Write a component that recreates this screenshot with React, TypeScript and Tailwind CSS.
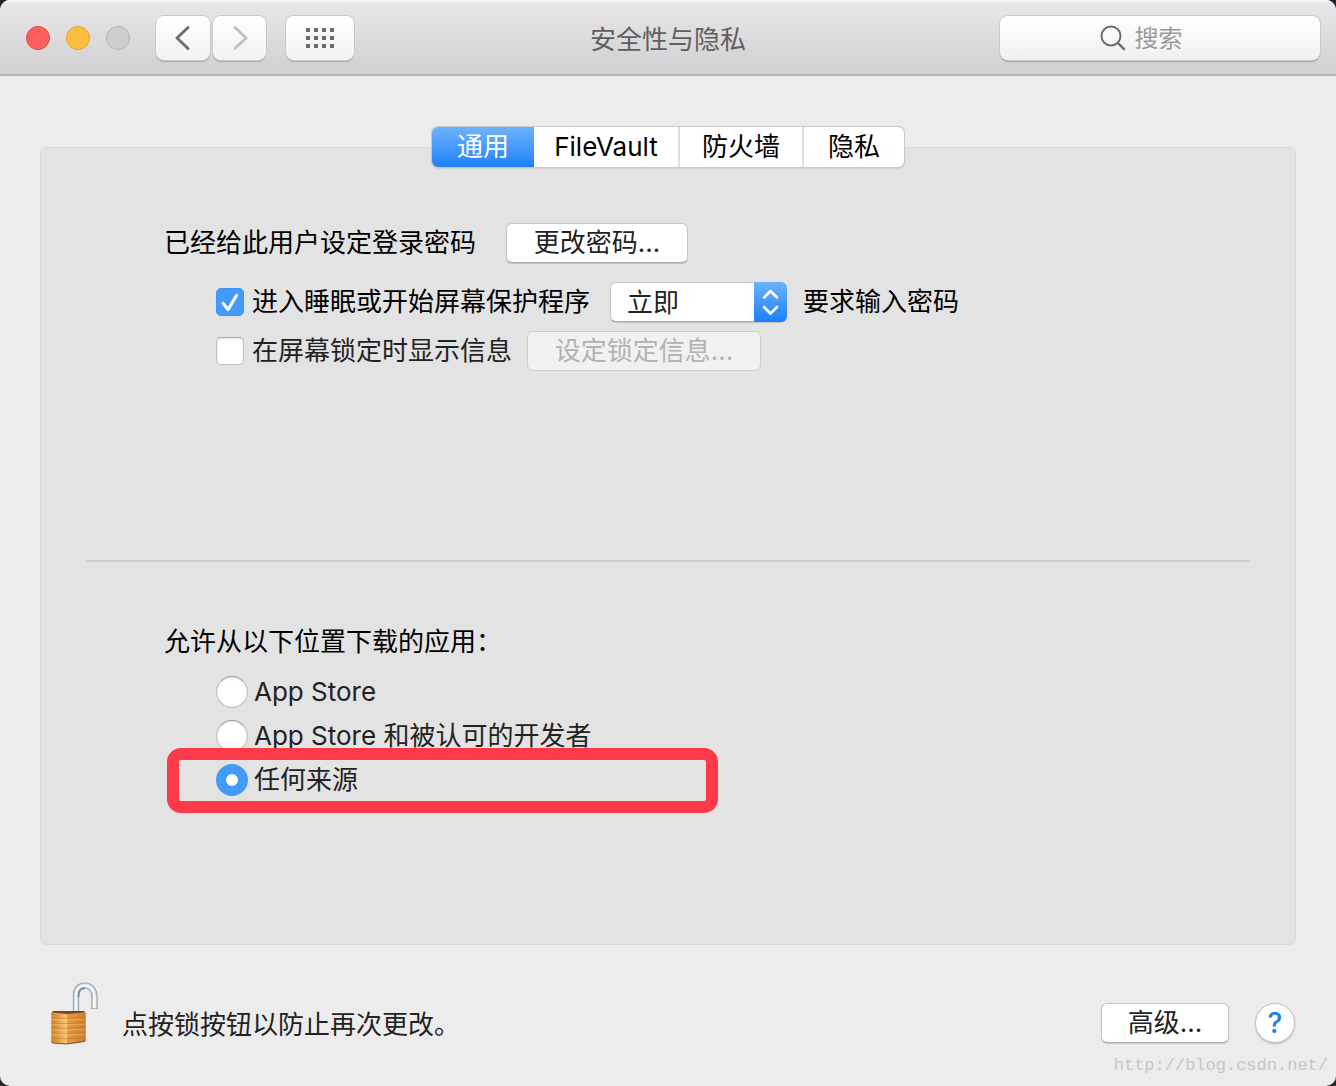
import { useState } from "react";
import type { ReactNode } from "react";
import clsx from "clsx";

const TABS = [
  { id: "general", label: "通用", width: "w-[102px]" },
  { id: "filevault", label: "FileVault", width: "w-[146px]" },
  { id: "firewall", label: "防火墙", width: "w-[124px]" },
  { id: "privacy", label: "隐私", width: "w-[100px]" },
];

const SOURCES = [
  { id: "app-store", label: "App Store" },
  { id: "identified", label: "App Store 和被认可的开发者" },
  { id: "anywhere", label: "任何来源" },
];

const DOTS = [0, 1, 2, 3].flatMap((x) => [0, 1, 2].map((y) => ({ x, y })));

interface ToolButtonProps {
  label: string;
  className: string;
  disabled?: boolean;
  children: ReactNode;
}

const ToolButton = (props: ToolButtonProps) => (
  <button
    aria-label={props.label}
    disabled={props.disabled}
    className={clsx(
      "flex h-11 items-center justify-center rounded-lg bg-linear-to-b from-white to-[#f1f1f1] shadow-[0_0_0_1px_#c9c7c9,0_2px_1px_#a9a7a9]",
      props.className,
    )}
  >
    {props.children}
  </button>
);

interface PushButtonProps {
  className: string;
  disabled?: boolean;
  children: ReactNode;
}

const PushButton = (props: PushButtonProps) => (
  <button
    disabled={props.disabled}
    className={clsx(
      "h-10 rounded-md border text-center leading-9",
      props.disabled
        ? "border-[#cbcbcb] bg-[#f1f1f1] text-[#b2b2b2]"
        : "border-[#c6c6c6] border-b-[#ababab] bg-white text-[#222] shadow-[0_1px_1px_#00000026]",
      props.className,
    )}
  >
    {props.children}
  </button>
);

interface CheckBoxProps {
  id: string;
  checked: boolean;
  onChange: (checked: boolean) => void;
}

const CheckBox = (props: CheckBoxProps) => (
  <span className="relative flex size-7 shrink-0">
    <input
      id={props.id}
      type="checkbox"
      checked={props.checked}
      onChange={(e) => props.onChange(e.target.checked)}
      className="size-7 appearance-none rounded-[5px] border border-[#bdbdbd] border-t-[#a9a9a9] bg-white shadow-[inset_0_1px_2px_#0000001a] checked:border-[#3d92f3] checked:bg-[#429bf8] checked:shadow-none"
    />
    {props.checked && (
      <svg
        viewBox="0 0 28 28"
        className="pointer-events-none absolute inset-0 size-7"
        fill="none"
        stroke="#fff"
        strokeWidth="3"
        strokeLinecap="round"
        strokeLinejoin="round"
      >
        <path d="M7.2 15.4 12 21.6 20.6 7.4" />
      </svg>
    )}
  </span>
);

const LockIcon = () => (
  <svg viewBox="0 0 50 64" className="h-16 w-[50px]">
    <defs>
      <linearGradient id="lockFront" x1="0" x2="1">
        <stop offset="0" stopColor="#cf8431" />
        <stop offset="0.5" stopColor="#e8a04b" />
        <stop offset="1" stopColor="#fcc878" />
      </linearGradient>
      <linearGradient id="lockSide" x1="0" x2="1">
        <stop offset="0" stopColor="#e59a42" />
        <stop offset="0.5" stopColor="#dc8f3a" />
        <stop offset="1" stopColor="#c97c2c" />
      </linearGradient>
    </defs>
    <g fill="none">
      <path d="M26 31V14C26 7.5 30 4.5 35 4.5S44.500 8.500 44.500 16V28" stroke="#8d9aa3" strokeWidth="6.200" />
      <path d="M26 31V14C26 7.5 30 4.5 35 4.5S44.500 8.500 44.500 16V27.200" stroke="#c9d2d8" strokeWidth="4.600" />
      <path d="M26 31V14C26 7.5 30 4.5 35 4.5S44.500 8.500 44.500 16V27.200" stroke="#f4f7f9" strokeWidth="2.600" />
      <path d="M28.500 16C28.500 9.500 31 7 35 7" stroke="#7e8c96" strokeWidth="1.800" />
    </g>
    <path d="M1.300 31.500 3 30H34L35.700 31.500 17 34Z" fill="#79471a" />
    <path d="M1.300 31.500 17 33V63L2.500 62Q1.300 61.500 1.300 60Z" fill="url(#lockFront)" />
    <path d="M17 33 35.700 31.500V58.500Q35.700 60 34 60.500L17 63Z" fill="url(#lockSide)" />
    <g fill="none" strokeWidth="0.900">
      <path
        d="M1.300 37 17 37.500 35.700 36.500M1.300 42 17 42.500 35.700 41.500M1.300 47 17 47.500 35.700 46.500M1.300 52 17 52.500 35.700 51.500M1.300 57 17 57.700 35.700 56"
        stroke="#a85f1b"
        opacity="0.4"
      />
      <path
        d="M1.300 38.500 17 39 35.700 38M1.300 43.500 17 44 35.700 43M1.300 48.500 17 49 35.700 48M1.300 53.500 17 54 35.700 53"
        stroke="#ffd58c"
        opacity="0.45"
      />
    </g>
    <path d="M1.500 60.500Q1.500 61.800 3 62L17 63 34 60.500Q35.500 60 35.500 58.500" fill="none" stroke="#8a4a16" />
  </svg>
);

export default function App() {
  const [tab, setTab] = useState("general");
  const [requirePassword, setRequirePassword] = useState(true);
  const [showMessage, setShowMessage] = useState(false);
  const [source, setSource] = useState("anywhere");

  return (
    <div className="min-h-screen bg-[#25232a] font-[Inter,'Noto_Sans_CJK_SC',sans-serif] text-[26px] leading-10 text-black">
      <div className="relative flex min-h-screen flex-col overflow-hidden rounded-[10px] bg-[#ececec]">
        <header className="grid grid-cols-[1fr_auto_1fr] items-center border-b-2 border-[#b3b1b3] bg-linear-to-b from-[#e9e7e9] to-[#d1cfd1] px-4 pt-4 pb-[14px] shadow-[inset_0_2px_0_#f5f4f5]">
          <div className="flex items-center">
            <div className="ml-[10px] flex gap-4">
              <button aria-label="关闭" className="size-6 rounded-full border border-[#e1484a] bg-[#fc605c]" />
              <button aria-label="最小化" className="size-6 rounded-full border border-[#e0a033] bg-[#fdbd3f]" />
              <button aria-label="缩放" disabled className="size-6 rounded-full border border-[#b3b1b3] bg-[#cfcecf]" />
            </div>
            <div className="ml-[26px] flex gap-[3px]">
              <ToolButton label="后退" className="w-[54px]">
                <svg viewBox="0 0 16 26" className="h-[26px] w-4" fill="none" stroke="#6f6f6f" strokeWidth="3" strokeLinecap="round" strokeLinejoin="round">
                  <path d="M13 2.500 2 13 13 23.500" />
                </svg>
              </ToolButton>
              <ToolButton label="前进" disabled className="w-[53px]">
                <svg viewBox="0 0 16 26" className="h-[26px] w-4" fill="none" stroke="#c1c1c1" strokeWidth="3" strokeLinecap="round" strokeLinejoin="round">
                  <path d="M3 2.500 14 13 3 23.500" />
                </svg>
              </ToolButton>
            </div>
            <ToolButton label="显示全部" className="ml-5 w-[68px]">
              <svg viewBox="0 0 28 20" className="h-5 w-7" fill="#6a6a6a">
                {DOTS.map((dot) => (
                  <rect key={`${dot.x}-${dot.y}`} x={dot.x * 8} y={dot.y * 8} width="4" height="4" />
                ))}
              </svg>
            </ToolButton>
          </div>
          <h1 className="pt-1 text-[#5f5f5f]">安全性与隐私</h1>
          <label className="flex h-11 w-80 items-center justify-center gap-[9px] justify-self-end rounded-lg bg-linear-to-b from-white to-[#f0f0f0] pr-[38px] shadow-[0_0_0_1px_#c9c7c9,0_2px_1px_#a9a7a9]">
            <svg viewBox="0 0 26 26" className="size-[26px]" fill="none" stroke="#6d6d6d" strokeWidth="2">
              <circle cx="11" cy="11" r="9.500" />
              <path d="m17.800 17.800 7 7" strokeWidth="2.400" />
            </svg>
            <input
              type="text"
              aria-label="搜索"
              placeholder="搜索"
              className="w-12 bg-transparent pt-0.5 text-2xl outline-none placeholder:text-[#9a9a9a]"
            />
          </label>
        </header>

        <main className="flex flex-1 flex-col px-10 pt-[51px]">
          <div
            role="tablist"
            className="relative z-10 -mb-5 flex h-10 self-center overflow-hidden rounded-md bg-white shadow-[0_0_0_1px_#c8c8c8,0_1px_2px_#00000040]"
          >
            {TABS.map((item) => (
              <button
                key={item.id}
                role="tab"
                aria-selected={tab === item.id}
                onClick={() => setTab(item.id)}
                className={clsx(
                  "h-10 border-[#dedede] text-center not-last:border-r-2",
                  item.width,
                  tab === item.id && "border-r-0! bg-linear-to-b from-[#6cb3fa] to-[#1a80fc] text-white",
                )}
              >
                {item.label}
              </button>
            ))}
          </div>

          <section className="flex-1 rounded-md border border-[#d9d9d9] bg-[#e3e3e3] pt-[75px] pb-20">
            <div className="flex items-center gap-[30px] pl-[123px]">
              <span>已经给此用户设定登录密码</span>
              <PushButton className="w-[182px]">更改密码...</PushButton>
            </div>
            <div className="mt-[19px] flex items-center pl-[175px]">
              <CheckBox id="require" checked={requirePassword} onChange={setRequirePassword} />
              <label htmlFor="require" className="ml-2">
                进入睡眠或开始屏幕保护程序
              </label>
              <span className="relative ml-5 flex">
                <select
                  aria-label="要求输入密码的时间"
                  className="h-10 w-[177px] appearance-none rounded-md border border-[#c6c6c6] border-b-[#ababab] bg-white pl-4 text-[#222] shadow-[0_1px_1px_#00000026]"
                >
                  <option>立即</option>
                </select>
                <svg viewBox="0 0 33 40" className="pointer-events-none absolute inset-y-0 right-0 h-10 w-[33px] rounded-r-md" fill="none">
                  <defs>
                    <linearGradient id="stepper" x2="0" y2="1">
                      <stop stopColor="#6cb3fa" />
                      <stop offset="1" stopColor="#1a80fc" />
                    </linearGradient>
                  </defs>
                  <rect width="33" height="40" fill="url(#stepper)" />
                  <path
                    d="m10 15.500 6.500-6.500 6.500 6.500M10 25l6.500 6.500L23 25"
                    stroke="#fff"
                    strokeWidth="2.600"
                    strokeLinecap="round"
                    strokeLinejoin="round"
                  />
                </svg>
              </span>
              <span className="ml-4">要求输入密码</span>
            </div>
            <div className="mt-[9px] flex items-center pl-[175px] text-[#222]">
              <CheckBox id="message" checked={showMessage} onChange={setShowMessage} />
              <label htmlFor="message" className="ml-2">
                在屏幕锁定时显示信息
              </label>
              <PushButton disabled={!showMessage} className="ml-[15px] w-[234px]">
                设定锁定信息...
              </PushButton>
            </div>

            <hr className="mx-[45px] mt-[189px] border-t-2 border-[#cdcdcd]" />

            <fieldset className="mt-[60px] pl-[123px] text-[#222]">
              <legend className="text-black">允许从以下位置下载的应用：</legend>
              <div className="relative mt-2 flex flex-col pl-[52px]">
                {SOURCES.map((item) => (
                  <label key={item.id} className="flex h-11 items-center gap-1.5">
                    <input
                      type="radio"
                      name="source"
                      checked={source === item.id}
                      onChange={() => setSource(item.id)}
                      className="size-8 appearance-none rounded-full border border-[#bdbdbd] border-t-[#999] bg-white shadow-[inset_0_1px_2px_#0000001a] checked:border-10 checked:border-[#429bf8] checked:shadow-none"
                    />
                    {item.label}
                  </label>
                ))}
                <div className="pointer-events-none absolute top-[78px] left-[3px] h-[65px] w-[551px] rounded-[14px] border-12 border-[#fc3a49]" />
              </div>
            </fieldset>
          </section>
        </main>

        <footer className="flex items-end pt-9 pr-[41px] pb-[41px] pl-[50px] text-[#222]">
          <button aria-label="锁定">
            <LockIcon />
          </button>
          <p className="ml-[22px] flex-1">点按锁按钮以防止再次更改。</p>
          <div className="flex gap-[26px] pb-0.5">
            <PushButton className="w-32">高级...</PushButton>
            <button
              aria-label="帮助"
              className="flex size-10 items-center justify-center rounded-full border border-[#c2c2c2] bg-white shadow-[0_1px_2px_#00000033]"
            >
              <span className="text-[28px] font-medium text-[#1d7bdd]">?</span>
            </button>
          </div>
        </footer>

        <span className="absolute right-2 bottom-2 font-['Liberation_Mono',monospace] text-[17px] leading-6 text-[#c6c6c6]">
          http://blog.csdn.net/
        </span>
      </div>
    </div>
  );
}
